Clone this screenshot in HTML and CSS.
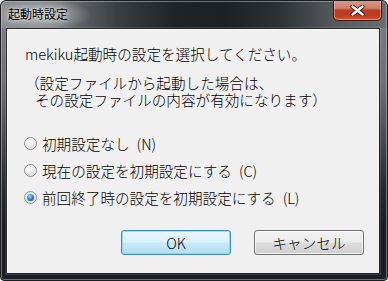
FILE: index.html
```html
<!DOCTYPE html>
<html lang="ja">
<head>
<meta charset="utf-8">
<title>起動時設定</title>
<link rel="stylesheet" href="styles.css">
</head>
<body>
<div class="window">
  <div class="titlebar">
    <span class="title">起動時設定</span>
    <button class="close" aria-label="閉じる">
      <svg width="15" height="11" viewBox="0 0 15 11">
        <path d="M2.5 1.5 L12.5 9.5 M12.5 1.5 L2.5 9.5" stroke="#3b1c16" stroke-width="4.2" stroke-linecap="round" fill="none"/>
        <path d="M2.5 1.5 L12.5 9.5 M12.5 1.5 L2.5 9.5" stroke="#ffffff" stroke-width="2.4" stroke-linecap="round" fill="none"/>
      </svg>
    </button>
  </div>
  <div class="client">
    <p class="lead">mekiku起動時の設定を選択してください。</p>
    <p class="note"><span class="line">（設定ファイルから起動した場合は、</span><span class="line indent">その設定ファイルの内容が有効になります）</span></p>
    <div class="options">
      <label class="opt"><span class="radio"></span><span>初期設定なし<span class="key">(N)</span></span></label>
      <label class="opt"><span class="radio"></span><span>現在の設定を初期設定にする<span class="key">(C)</span></span></label>
      <label class="opt"><span class="radio checked"></span><span>前回終了時の設定を初期設定にする<span class="key">(L)</span></span></label>
    </div>
    <div class="buttons">
      <button class="btn default">OK</button>
      <button class="btn">キャンセル</button>
    </div>
  </div>
</div>
</body>
</html>
```
FILE: styles.css
```css
html, body {
  margin: 0;
  padding: 0;
  background: #ffffff;
}

.window {
  width: 388px;
  height: 281px;
  box-sizing: border-box;
  border: 1px solid #1a1d21;
  border-radius: 6px 6px 4px 4px;
  box-shadow: inset 0 0 0 1px rgba(210, 215, 220, 0.45);
  padding: 0 7px 6px 5px;
  display: flex;
  flex-direction: column;
  overflow: hidden;
  background:
    radial-gradient(ellipse 50px 17px at 40px 14px, rgba(205, 208, 211, 0.8), rgba(205, 208, 211, 0) 100%),
    linear-gradient(to right, #888b8e 0%, #74787b 14%, #3a3f44 30%, #1f2429 45%, #1c2126 58%, #2c3136 72%, #55595d 86%, #6a6e72 100%) top left / 100% 27px no-repeat,
    linear-gradient(to bottom, #7e8285 0%, #6c7074 30%, #474b50 50%, #23282d 68%, #1b1f24 80%, #1b1f24 100%);
}

.titlebar {
  height: 27px;
  flex: none;
  display: flex;
  align-items: flex-start;
}

.title {
  font-family: "Noto Sans CJK JP", "Noto Sans", sans-serif;
  font-size: 12px;
  line-height: 16px;
  color: #000;
  margin: 5px 0 0 2px;
  text-shadow: 0 0 6px rgba(230, 232, 235, 0.9), 0 0 3px rgba(230, 232, 235, 0.9);
}

.close {
  margin: -1px -2px 0 auto;
  width: 49px;
  height: 21px;
  box-sizing: border-box;
  padding: 0;
  border: 1px solid #3f1a12;
  border-top: none;
  border-radius: 0 0 5px 5px;
  background: linear-gradient(to bottom, #d89a8c 0%, #cf7e6c 40%, #b83d24 52%, #bd3a1f 75%, #d8532f 100%);
  box-shadow: inset 0 0 0 1px rgba(255, 215, 200, 0.45);
  display: flex;
  align-items: center;
  justify-content: center;
}

.close svg {
  display: block;
  margin-top: 1px;
}

.client {
  flex: 1;
  background: #f0f0f0;
  border: 1px solid #24282c;
  box-shadow: inset 1px 1px 0 #ffffff, 0 0 0 1px rgba(255, 255, 255, 0.12);
  display: flex;
  flex-direction: column;
  padding: 17px 15px 18px 18px;
  font-family: "Noto Sans CJK JP", "Noto Sans", sans-serif;
  font-size: 14.6px;
  font-weight: 300;
  color: #000;
}

.lead, .note {
  margin: 0;
  line-height: 16px;
  white-space: nowrap;
}

.note {
  margin-top: 12px;
  line-height: 17px;
  display: flex;
  flex-direction: column;
}

.indent {
  padding-left: 10px;
}

.options {
  margin-top: 22px;
  display: flex;
  flex-direction: column;
}

.opt {
  height: 27px;
  display: flex;
  align-items: center;
  gap: 5px;
  white-space: nowrap;
  line-height: 16px;
}

.key {
  margin-left: 7px;
}

.radio {
  width: 13px;
  height: 13px;
  box-sizing: border-box;
  border-radius: 50%;
  border: 1px solid #8e9092;
  background: radial-gradient(circle at 40% 35%, #ffffff 0%, #f2f2f2 30%, #d9dadb 70%, #c9cacc 100%);
  box-shadow: inset 0 0 0 1px rgba(255, 255, 255, 0.6);
  display: flex;
  align-items: center;
  justify-content: center;
  flex: none;
  margin-left: -1px;
}

.radio.checked::after {
  content: "";
  width: 7px;
  height: 7px;
  border-radius: 50%;
  background: radial-gradient(circle at 40% 35%, #b8e6ff 0%, #4aa6ec 30%, #1f68c0 65%, #103f80 100%);
}

.buttons {
  margin-top: auto;
  display: flex;
  justify-content: flex-end;
  gap: 23px;
}

.btn {
  width: 110px;
  height: 25px;
  box-sizing: border-box;
  padding: 0;
  border: 1px solid #707070;
  border-radius: 3px;
  background: linear-gradient(to bottom, #f2f2f2 0%, #ebebeb 48%, #dddddd 52%, #cfcfcf 100%);
  box-shadow: inset 0 0 0 1px rgba(255, 255, 255, 0.75);
  font-family: "Noto Sans CJK JP", "Noto Sans", sans-serif;
  font-size: 14.6px;
  font-weight: 300;
  line-height: 16px;
  color: #000;
}

.btn.default {
  border-color: #3c8dc4;
  background: linear-gradient(to bottom, #eaf6fd 0%, #dcf1fc 48%, #c9e9fb 52%, #b3dcf3 100%);
  box-shadow: inset 0 0 0 1px rgba(120, 220, 252, 0.8);
}
```
